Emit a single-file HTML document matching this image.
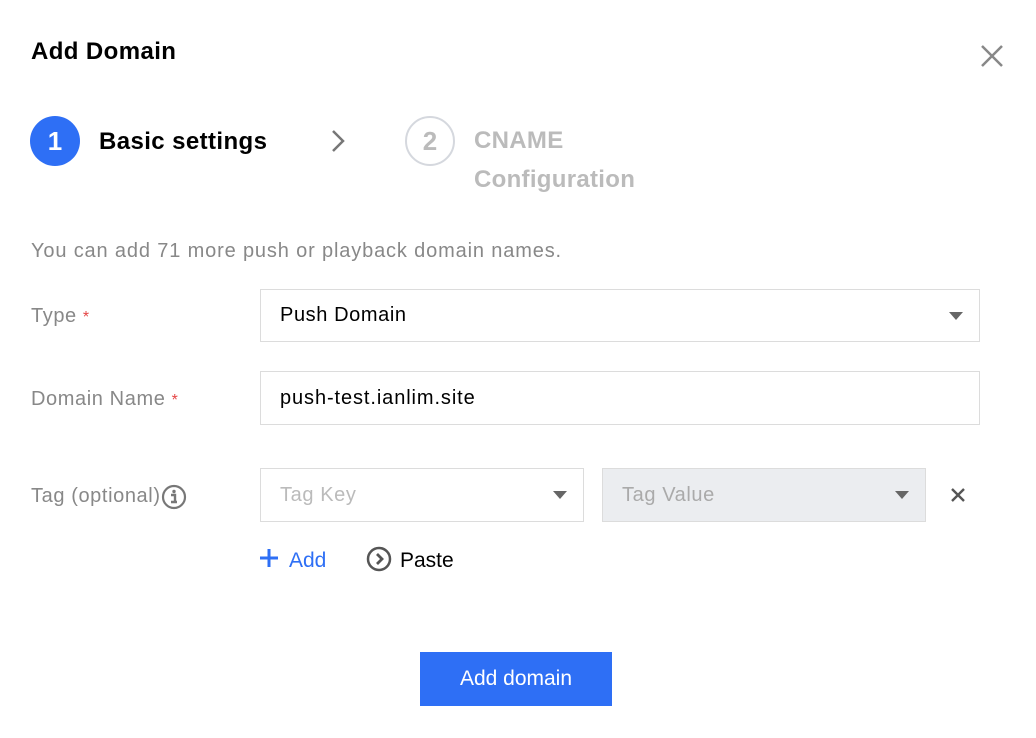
<!DOCTYPE html>
<html><head><style>
body{margin:0;width:1036px;height:738px;background:#fff;font-family:"Liberation Sans",sans-serif;position:relative;overflow:hidden}
.a{position:absolute}
.lbl{position:absolute;left:31px;font-size:20px;color:#888;letter-spacing:0.6px}
.star{color:#e54545;font-size:16px}
.box{position:absolute;border:1px solid #dcdcdc;box-sizing:border-box;font-size:20px;color:#000;padding-left:19px;display:flex;align-items:center;background:#fff;letter-spacing:0.6px}
.tri{position:absolute;width:0;height:0;border-left:7px solid transparent;border-right:7px solid transparent;border-top:8px solid #666}
</style></head><body>
<div class="a" style="left:31px;top:38px;font-size:24px;font-weight:bold;color:#000;letter-spacing:0.4px">Add Domain</div>
<svg class="a" style="left:980px;top:44px" width="24" height="24"><path d="M2 2L22 22M22 2L2 22" stroke="#888" stroke-width="2.5"/></svg>
<div class="a" style="left:30px;top:116px;width:50px;height:50px;border-radius:50%;background:#2e6ff5;color:#fff;font-size:26px;font-weight:bold;text-align:center;line-height:50px">1</div>
<div class="a" style="left:99px;top:128px;font-size:24px;font-weight:bold;color:#000;letter-spacing:0.4px">Basic settings</div>
<svg class="a" style="left:328px;top:128px" width="20" height="26"><path d="M5 3L15 13L5 23" stroke="#777" stroke-width="2.5" fill="none"/></svg>
<div class="a" style="left:405px;top:116px;width:46px;height:46px;border-radius:50%;border:2px solid #d5d8de;color:#bbb;font-size:26px;font-weight:bold;text-align:center;line-height:46px">2</div>
<div class="a" style="left:474px;top:121px;font-size:24px;font-weight:bold;color:#bbb;line-height:39px;letter-spacing:0.3px">CNAME<br>Configuration</div>
<div class="a" style="left:31px;top:240px;font-size:20px;color:#888;letter-spacing:0.85px">You can add 71 more push or playback domain names.</div>
<div class="lbl" style="top:305px">Type <span class="star">*</span></div>
<div class="box" style="left:260px;top:289px;width:720px;height:53px">Push Domain</div>
<div class="tri" style="left:949px;top:312px"></div>
<div class="lbl" style="top:388px">Domain Name <span class="star">*</span></div>
<div class="box" style="left:260px;top:371px;width:720px;height:54px;letter-spacing:0.9px">push-test.ianlim.site</div>
<div class="lbl" style="top:485px">Tag (optional)</div>
<svg class="a" style="left:161px;top:484px" width="26" height="26"><circle cx="13" cy="13" r="11" stroke="#777" stroke-width="2.2" fill="none"/><circle cx="13" cy="7.5" r="1.7" fill="#777"/><path d="M10 11H14V18M10 18H16" stroke="#777" stroke-width="2.4" fill="none"/></svg>
<div class="box" style="left:260px;top:468px;width:324px;height:54px;color:#bbb">Tag Key</div>
<div class="tri" style="left:553px;top:491px"></div>
<div class="box" style="left:602px;top:468px;width:324px;height:54px;color:#aaa;background:#ebedf0">Tag Value</div>
<div class="tri" style="left:895px;top:491px"></div>
<svg class="a" style="left:950px;top:487px" width="16" height="16"><path d="M2 2L14 14M14 2L2 14" stroke="#555" stroke-width="2.4"/></svg>
<svg class="a" style="left:259px;top:548px" width="20" height="20"><path d="M10 1V19M1 10H19" stroke="#2e6ff5" stroke-width="3"/></svg>
<div class="a" style="left:289px;top:549px;font-size:21px;color:#2e6ff5">Add</div>
<svg class="a" style="left:366px;top:546px" width="26" height="26"><circle cx="13" cy="13" r="11" stroke="#555" stroke-width="2.5" fill="none"/><path d="M11 8L16 13L11 18" stroke="#555" stroke-width="2.8" fill="none"/></svg>
<div class="a" style="left:400px;top:549px;font-size:21px;color:#000">Paste</div>
<div class="a" style="left:420px;top:652px;width:192px;height:54px;background:#2e6ff5;color:#fff;font-size:21px;text-align:center;line-height:54px">Add domain</div>
</body></html>
